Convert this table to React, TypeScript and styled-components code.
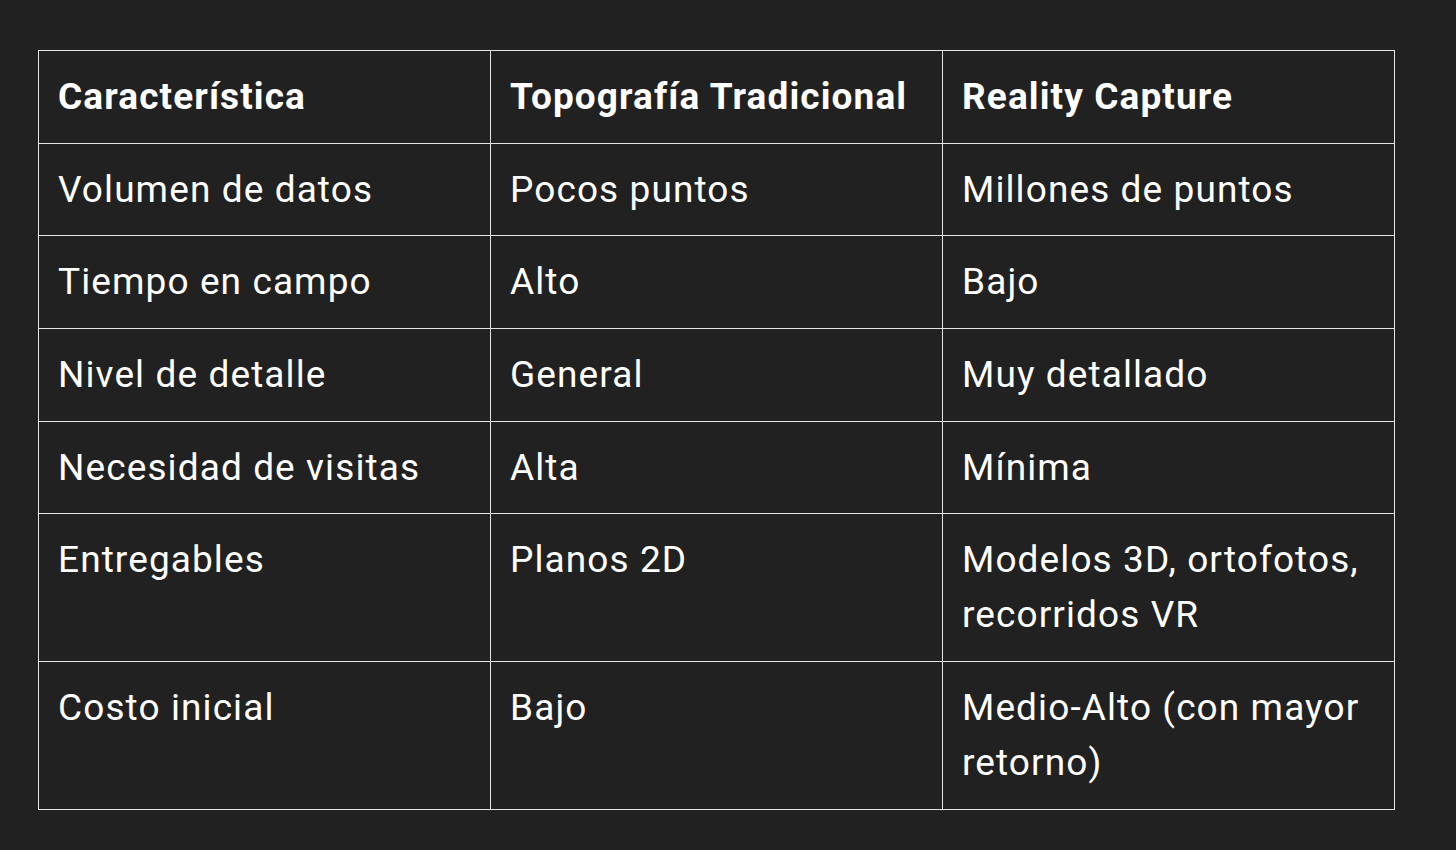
import React from "react";
import styled, { createGlobalStyle } from "styled-components";

const GlobalStyle = createGlobalStyle`
  html, body {
    margin: 0;
    padding: 0;
    background: #212121;
  }
  body {
    font-family: Roboto, "Liberation Sans", sans-serif;
    color: #ffffff;
  }
`;

const Page = styled.div`
  min-height: 850px;
  padding: 50px 0 0 38px;
  box-sizing: border-box;
`;

const Table = styled.table`
  width: 1357px;
  border-collapse: collapse;
  table-layout: fixed;
`;

const HeadCell = styled.th`
  border: 1px solid #e6e6e6;
  padding: 18px 19px 18.7px;
  text-align: left;
  vertical-align: top;
  font-size: 37px;
  line-height: 55px;
  font-weight: 700;
  letter-spacing: 1.1px;
`;

const Cell = styled.td`
  border: 1px solid #e6e6e6;
  padding: 18px 19px 18.7px;
  text-align: left;
  vertical-align: top;
  font-size: 37px;
  line-height: 55px;
  font-weight: 400;
  letter-spacing: 1.1px;
`;

const headers = ["Característica", "Topografía Tradicional", "Reality Capture"];

const rows: string[][] = [
  ["Volumen de datos", "Pocos puntos", "Millones de puntos"],
  ["Tiempo en campo", "Alto", "Bajo"],
  ["Nivel de detalle", "General", "Muy detallado"],
  ["Necesidad de visitas", "Alta", "Mínima"],
  ["Entregables", "Planos 2D", "Modelos 3D, ortofotos, recorridos VR"],
  ["Costo inicial", "Bajo", "Medio-Alto (con mayor retorno)"],
];

const App: React.FC = () => {
  return (
    <Page>
      <GlobalStyle />
      <Table>
        <thead>
          <tr>
            {headers.map((h) => (
              <HeadCell key={h}>{h}</HeadCell>
            ))}
          </tr>
        </thead>
        <tbody>
          {rows.map((r) => (
            <tr key={r[0]}>
              {r.map((c, i) => (
                <Cell key={i}>{c}</Cell>
              ))}
            </tr>
          ))}
        </tbody>
      </Table>
    </Page>
  );
};

export default App;
